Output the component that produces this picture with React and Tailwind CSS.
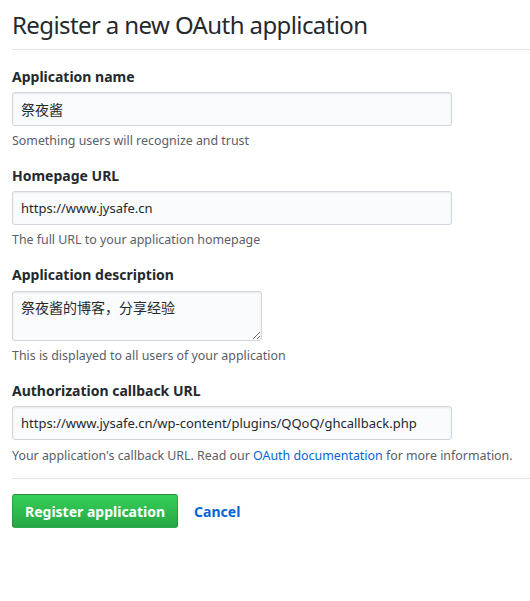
export default function App() {
  return (
    <div className="min-h-screen bg-white pl-3 pt-[9px] text-[#24292e] font-['Noto_Sans','Noto_Sans_CJK_SC',sans-serif]">
      <div className="border-b border-[#e1e4e8] pb-[8px]">
        <h1 className="text-[24px] leading-[32px] font-normal tracking-[-0.6px]">
          Register a new OAuth application
        </h1>
      </div>

      <form className="pt-[17px]" onSubmit={(e) => e.preventDefault()}>
        <Field label="Application name" note="Something users will recognize and trust">
          <input
            defaultValue="祭夜酱"
            className="mt-[5px] block h-[34px] w-[440px] rounded-[3px] border border-[#d1d5da] bg-[#fafbfc] px-2 text-[14px] text-[#24292e] shadow-[inset_0_1px_2px_rgba(27,31,35,0.075)] outline-none"
          />
        </Field>

        <Field label="Homepage URL" note="The full URL to your application homepage">
          <input
            defaultValue="https://www.jysafe.cn"
            className="mt-[5px] block h-[34px] w-[440px] rounded-[3px] border border-[#d1d5da] bg-[#fafbfc] px-2 text-[13px] text-[#24292e] shadow-[inset_0_1px_2px_rgba(27,31,35,0.075)] outline-none"
          />
        </Field>

        <Field label="Application description" note="This is displayed to all users of your application">
          <textarea
            defaultValue="祭夜酱的博客，分享经验"
            className="mt-[6px] block h-[50px] w-[250px] rounded-[3px] border border-[#d1d5da] bg-[#fafbfc] px-2 pt-[6px] text-[14px] leading-[20px] text-[#24292e] shadow-[inset_0_1px_2px_rgba(27,31,35,0.075)] outline-none"
          />
        </Field>

        <div>
          <label className="block text-[14px] font-bold leading-[20px]">
            Authorization callback URL
          </label>
          <input
            defaultValue="https://www.jysafe.cn/wp-content/plugins/QQoQ/ghcallback.php"
            className="mt-[5px] block h-[34px] w-[440px] rounded-[3px] border border-[#d1d5da] bg-[#fafbfc] px-2 text-[13px] text-[#24292e] shadow-[inset_0_1px_2px_rgba(27,31,35,0.075)] outline-none"
          />
          <p className="mt-[7px] text-[12.4px] leading-[18px] text-[#586069]">
            Your application's callback URL. Read our{" "}
            <a href="#" className="text-[#0366d6]">OAuth documentation</a>{" "}
            for more information.
          </p>
        </div>

        <div className="mt-[13px] flex items-center gap-[16px] border-t border-[#e1e4e8] pt-[15px]">
          <button
            type="submit"
            className="h-[34px] rounded-[3px] border border-[rgba(27,31,35,0.2)] bg-gradient-to-b from-[#34d058] to-[#28a745] px-[12px] text-[14px] font-bold text-white"
          >
            Register application
          </button>
          <a href="#" className="text-[14px] font-bold text-[#0366d6]">
            Cancel
          </a>
        </div>
      </form>
    </div>
  );
}

function Field({ label, note, children }) {
  return (
    <div className="mb-[16px]">
      <label className="block text-[14px] font-bold leading-[20px]">{label}</label>
      {children}
      <p className="mt-[6px] text-[12.4px] leading-[18px] text-[#586069]">{note}</p>
    </div>
  );
}
